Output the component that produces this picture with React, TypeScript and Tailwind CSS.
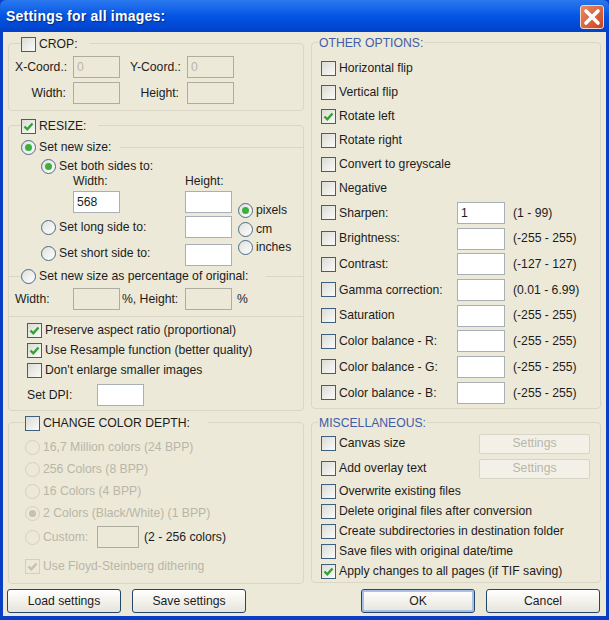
import type { ReactNode } from "react";

function CheckBox({ checked, disabled }: { checked?: boolean; disabled?: boolean }) {
  return (
    <span
      className={
        disabled
          ? "w-[15px] h-[15px] shrink-0 border border-[#d3d0c0] bg-[#ece9d8] flex items-center justify-center"
          : "w-[15px] h-[15px] shrink-0 border border-[#3d5f80] bg-gradient-to-br from-[#dcdcd6] to-[#fafaf8] flex items-center justify-center"
      }
    >
      {checked && (
        <svg width="11" height="11" viewBox="0 0 11 11">
          <path
            d="M1.5 5.5 L4.3 8.3 L9.5 2.5"
            fill="none"
            stroke={disabled ? "#c4c1b2" : "#2fa52f"}
            strokeWidth="2.4"
          />
        </svg>
      )}
    </span>
  );
}

function Radio({ checked, disabled }: { checked?: boolean; disabled?: boolean }) {
  return (
    <span
      className={
        disabled
          ? "w-[15px] h-[15px] shrink-0 rounded-full border border-[#d3d0c0] bg-[#ece9d8] flex items-center justify-center"
          : "w-[15px] h-[15px] shrink-0 rounded-full border border-[#4a6a88] bg-gradient-to-br from-[#e0e0da] to-white flex items-center justify-center"
      }
    >
      {checked && (
        <span
          className={
            disabled
              ? "w-[7px] h-[7px] rounded-full bg-[#c4c1b2]"
              : "w-[7px] h-[7px] rounded-full bg-[#3cb03c]"
          }
        />
      )}
    </span>
  );
}

function Field({ value, disabled, w = "w-[47px]" }: { value?: string; disabled?: boolean; w?: string }) {
  return (
    <span
      className={`${w} h-[22px] shrink-0 border flex items-center px-[3px] ${
        disabled
          ? "border-[#aeac9f] bg-[#ece9d8] text-[#b9b6a8]"
          : "border-[#a9b0b5] bg-white text-[#1c1c1c]"
      }`}
    >
      {value}
    </span>
  );
}

function Group({ className, children }: { className: string; children: ReactNode }) {
  return (
    <div className={`border border-[#d9d6c5] rounded-[4px] ${className}`}>{children}</div>
  );
}

function Legend({ children }: { children: ReactNode }) {
  return (
    <div className="h-[16px] -mt-[8px] pl-[12px] flex">
      <div className="bg-[#ece9d8] flex items-center gap-[3px] pr-[12px]">{children}</div>
    </div>
  );
}

function BlueLegend({ text }: { text: string }) {
  return (
    <div className="h-[16px] -mt-[8px] pl-[6px] flex">
      <div className="bg-[#ece9d8] flex items-center px-px text-[#3f5da8]">{text}</div>
    </div>
  );
}

function CheckRow({
  label,
  checked,
  h,
  className = "",
  children,
}: {
  label: string;
  checked?: boolean;
  h: string;
  className?: string;
  children?: ReactNode;
}) {
  return (
    <div className={`flex items-center ${h} ${className}`}>
      <CheckBox checked={checked} />
      <span className="ml-[3px]">{label}</span>
      {children}
    </div>
  );
}

function RadioRow({ label, className = "", checked }: { label: string; className?: string; checked?: boolean }) {
  return (
    <div className={`flex items-center gap-[3px] ${className}`}>
      <Radio checked={checked} />
      <span>{label}</span>
    </div>
  );
}

function DisabledRadio({ label, className = "", checked }: { label: string; className?: string; checked?: boolean }) {
  return (
    <div className={`flex items-center gap-[3px] h-[22px] text-[#b9b6a8] ${className}`}>
      <Radio disabled checked={checked} />
      <span>{label}</span>
    </div>
  );
}

function ValueRow({ label, value, range, h }: { label: string; value?: string; range: string; h: string }) {
  return (
    <CheckRow label={label} h={h}>
      <span className="ml-auto">
        <Field value={value} w="w-[48px]" />
      </span>
      <span className="w-[87px] pl-[8px]">{range}</span>
    </CheckRow>
  );
}

function PushButton({ label, primary, disabled, className = "" }: { label: string; primary?: boolean; disabled?: boolean; className?: string }) {
  if (disabled) {
    return (
      <div className={`flex items-center justify-center border border-[#d8d5c6] rounded-[2px] bg-[#f3f1e7] text-[#b9b6a8] ${className}`}>
        {label}
      </div>
    );
  }
  return (
    <div
      className={`flex items-center justify-center border border-[#24466b] rounded-[3px] bg-gradient-to-b from-white to-[#e6e4da] ${
        primary ? "shadow-[inset_0_0_0_2px_#a6c0e6]" : ""
      } ${className}`}
    >
      {label}
    </div>
  );
}

function TitleBar() {
  return (
    <div className="h-[32px] shrink-0 flex items-center pl-[6px] pr-[5px] rounded-t-[6px] bg-gradient-to-b from-[#2a78ee] via-[#0355e4] to-[#0240c8]">
      <span className="text-white font-bold text-[14px] tracking-[0.22px] [text-shadow:1px_1px_1px_#0a2a80]">
        Settings for all images:
      </span>
      <span className="ml-auto w-[24px] h-[24px] mt-[2px] rounded-[3px] border border-[#f4d8cc] bg-gradient-to-br from-[#e88a63] to-[#c8431c] flex items-center justify-center">
        <svg width="18" height="18" viewBox="0 0 18 18">
          <path d="M3 3 L15 15 M15 3 L3 15" stroke="#fff" strokeWidth="3.6" strokeLinecap="round" />
        </svg>
      </span>
    </div>
  );
}

function LeftColumn() {
  return (
    <div className="w-[296px] flex flex-col">
      <Group className="h-[68px] mt-[11px]">
        <Legend>
          <CheckBox />
          <span>CROP:</span>
        </Legend>
        <div className="mt-[4px] flex items-center pl-[6px]">
          <span className="w-[58px]">X-Coord.:</span>
          <Field value="0" disabled />
          <span className="w-[67px] text-right pr-[6px]">Y-Coord.:</span>
          <Field value="0" disabled />
        </div>
        <div className="mt-[4px] flex items-center">
          <span className="w-[64px] text-right pr-[7px]">Width:</span>
          <Field disabled />
          <span className="w-[67px] text-right pr-[8px]">Height:</span>
          <Field disabled />
        </div>
      </Group>

      <Group className="h-[286px] mt-[14px]">
        <Legend>
          <CheckBox checked />
          <span>RESIZE:</span>
        </Legend>
        <div className="mt-[5px] h-[16px] pl-[12px] flex items-center gap-[3px]">
          <Radio checked />
          <span>Set new size:</span>
          <span className="flex-1 h-px bg-[#d9d6c5] ml-[6px]" />
        </div>
        <RadioRow label="Set both sides to:" checked className="mt-[3px] h-[16px] pl-[32px]" />
        <div className="flex">
          <div className="w-[229px]">
            <div className="h-[14px] flex items-center pl-[64px]">
              <span className="w-[112px]">Width:</span>
              <span>Height:</span>
            </div>
            <div className="mt-[3px] flex pl-[64px]">
              <Field value="568" />
              <span className="ml-[65px]">
                <Field />
              </span>
            </div>
            <div className="mt-[3px] flex items-center pl-[32px]">
              <RadioRow label="Set long side to:" className="w-[144px]" />
              <Field />
            </div>
            <div className="mt-[6px] flex items-center pl-[32px]">
              <RadioRow label="Set short side to:" className="w-[144px] mb-[4px]" />
              <Field />
            </div>
          </div>
          <div className="mt-[27px]">
            <RadioRow label="pixels" checked className="h-[19px]" />
            <RadioRow label="cm" className="h-[18px]" />
            <RadioRow label="inches" className="h-[18px]" />
          </div>
        </div>
        <div className="mt-[2px] h-[16px] flex items-center">
          <span className="w-[12px] h-px bg-[#d9d6c5]" />
          <Radio />
          <span className="ml-[3px]">Set new size as percentage of original:</span>
          <span className="flex-1 h-px bg-[#d9d6c5] ml-[18px]" />
        </div>
        <div className="mt-[4px] flex items-center pl-[6px]">
          <span className="w-[58px]">Width:</span>
          <Field disabled />
          <span className="w-[65px] pl-[2px]">%, Height:</span>
          <Field disabled />
          <span className="ml-[5px]">%</span>
        </div>
        <div className="mt-[6px] border-t border-[#d9d6c5]" />
        <div className="mt-[3px] pl-[18px]">
          <CheckRow label="Preserve aspect ratio (proportional)" checked h="h-[20px]" />
          <CheckRow label="Use Resample function (better quality)" checked h="h-[20px]" />
          <CheckRow label="Don't enlarge smaller images" h="h-[20px]" />
          <div className="mt-[4px] flex items-center">
            <span className="w-[70px]">Set DPI:</span>
            <Field />
          </div>
        </div>
      </Group>

      <Group className="h-[162px] mt-[11px]">
        <div className="h-[16px] -mt-[8px] pl-[16px] flex">
          <div className="bg-[#ece9d8] flex items-center gap-[3px] pr-[18px]">
            <CheckBox />
            <span>CHANGE COLOR DEPTH:</span>
          </div>
        </div>
        <div className="mt-[5px] pl-[16px]">
          <DisabledRadio label="16,7 Million colors (24 BPP)" />
          <DisabledRadio label="256 Colors (8 BPP)" />
          <DisabledRadio label="16 Colors (4 BPP)" />
          <DisabledRadio label="2 Colors (Black/White) (1 BPP)" checked />
          <div className="mt-[2px] flex items-center">
            <DisabledRadio label="Custom:" className="w-[72px]" />
            <Field disabled w="w-[42px]" />
            <span className="ml-[5px]">(2 - 256 colors)</span>
          </div>
          <div className="mt-[7px] h-[22px] flex items-center gap-[3px] text-[#b9b6a8]">
            <CheckBox checked disabled />
            <span>Use Floyd-Steinberg dithering</span>
          </div>
        </div>
      </Group>
    </div>
  );
}

function RightColumn() {
  return (
    <div className="w-[290px] flex flex-col">
      <Group className="h-[367px] mt-[10px]">
        <BlueLegend text="OTHER OPTIONS:" />
        <div className="mt-[5px] pl-[9px] pr-[8px]">
          <CheckRow label="Horizontal flip" h="h-[24px]" />
          <CheckRow label="Vertical flip" h="h-[24px]" />
          <CheckRow label="Rotate left" checked h="h-[24px]" />
          <CheckRow label="Rotate right" h="h-[24px]" />
          <CheckRow label="Convert to greyscale" h="h-[24px]" />
          <CheckRow label="Negative" h="h-[24px]" />
          <ValueRow label="Sharpen:" value="1" range="(1 - 99)" h="h-[25.7px]" />
          <ValueRow label="Brightness:" range="(-255 - 255)" h="h-[25.7px]" />
          <ValueRow label="Contrast:" range="(-127 - 127)" h="h-[25.7px]" />
          <ValueRow label="Gamma correction:" range="(0.01 - 6.99)" h="h-[25.7px]" />
          <ValueRow label="Saturation" range="(-255 - 255)" h="h-[25.7px]" />
          <ValueRow label="Color balance - R:" range="(-255 - 255)" h="h-[25.7px]" />
          <ValueRow label="Color balance - G:" range="(-255 - 255)" h="h-[25.7px]" />
          <ValueRow label="Color balance - B:" range="(-255 - 255)" h="h-[25.7px]" />
        </div>
      </Group>

      <Group className="h-[161px] mt-[13px]">
        <BlueLegend text="MISCELLANEOUS:" />
        <div className="pl-[9px] pr-[10px]">
          <CheckRow label="Canvas size" h="h-[25px]">
            <PushButton label="Settings" disabled className="ml-auto w-[111px] h-[20px]" />
          </CheckRow>
          <CheckRow label="Add overlay text" h="h-[25px]">
            <PushButton label="Settings" disabled className="ml-auto w-[111px] h-[20px]" />
          </CheckRow>
          <CheckRow label="Overwrite existing files" h="h-[20px]" />
          <CheckRow label="Delete original files after conversion" h="h-[20px]" />
          <CheckRow label="Create subdirectories in destination folder" h="h-[20px]" />
          <CheckRow label="Save files with original date/time" h="h-[20px]" />
          <CheckRow label="Apply changes to all pages (if TIF saving)" checked h="h-[20px]" />
        </div>
      </Group>
    </div>
  );
}

export default function App() {
  return (
    <div className="w-[609px] h-[620px] flex flex-col bg-[#0a3fc4] font-['Liberation_Sans',Arial,sans-serif] text-[12.2px] leading-none text-[#1c1c1c] overflow-hidden">
      <TitleBar />
      <div className="flex-1 mx-[3px] mb-[4px] bg-[#ece9d8] flex flex-col">
        <div className="flex pl-[5px] gap-[7px]">
          <LeftColumn />
          <RightColumn />
        </div>
        <div className="flex mt-[5px] pl-[4px] gap-[11px]">
          <PushButton label="Load settings" className="w-[114px] h-[24px]" />
          <PushButton label="Save settings" className="w-[114px] h-[24px]" />
          <PushButton label="OK" primary className="ml-[104px] w-[114px] h-[24px]" />
          <PushButton label="Cancel" className="w-[114px] h-[24px]" />
        </div>
      </div>
    </div>
  );
}
